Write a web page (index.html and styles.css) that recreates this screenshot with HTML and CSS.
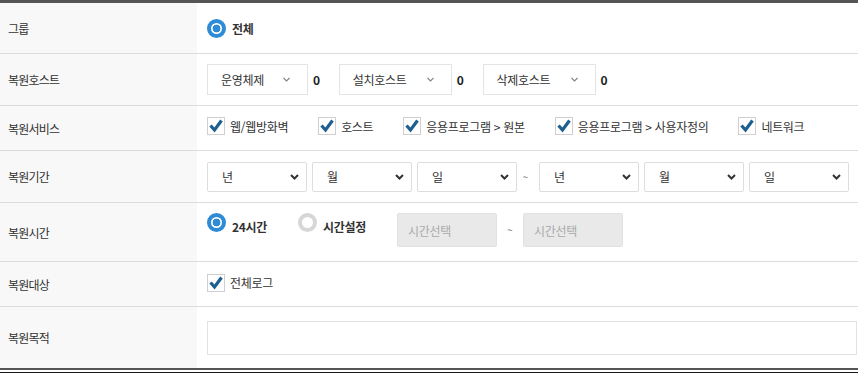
FILE: index.html
```html
<!DOCTYPE html>
<html lang="ko">
<head>
  <meta charset="UTF-8" />
  <title>복원 설정</title>
  <meta name="viewport" content="width=device-width, initial-scale=1.0" />
  <link rel="stylesheet" href="styles.css">
</head>
<body>
  <div class="board">
    <table class="form-table">
      <colgroup>
        <col class="col-label">
        <col>
      </colgroup>
      <tbody>
        <tr>
          <th>그룹</th>
          <td><div class="line h50">
            <label class="radio"><span class="radio-mark on"></span><b>전체</b></label>
          </div></td>
        </tr>
        <tr>
          <th>복원호스트</th>
          <td><div class="line h51">
            <div class="drop w101">운영체제<svg width="7" height="5" viewBox="0 0 7 5"><path d="M0.5 1 L3.5 4 L6.5 1" fill="none" stroke="#8a7f86" stroke-width="1.1"/></svg></div>
            <b class="count">0</b>
            <div class="drop w113">설치호스트<svg width="7" height="5" viewBox="0 0 7 5"><path d="M0.5 1 L3.5 4 L6.5 1" fill="none" stroke="#7f8590" stroke-width="1.1"/></svg></div>
            <b class="count">0</b>
            <div class="drop w113">삭제호스트<svg width="7" height="5" viewBox="0 0 7 5"><path d="M0.5 1 L3.5 4 L6.5 1" fill="none" stroke="#8a7f86" stroke-width="1.1"/></svg></div>
            <b class="count">0</b>
          </div></td>
        </tr>
        <tr>
          <th>복원서비스</th>
          <td><div class="line h44 lift">
            <label class="check"><span class="check-mark"><svg width="16" height="16" viewBox="0 0 16 16"><path d="M2.5 7.5 L6.5 12 L13.5 2.5" fill="none" stroke="#1d5f8e" stroke-width="3.2"/></svg></span>웹/웹방화벽</label>
            <label class="check"><span class="check-mark"><svg width="16" height="16" viewBox="0 0 16 16"><path d="M2.5 7.5 L6.5 12 L13.5 2.5" fill="none" stroke="#1d5f8e" stroke-width="3.2"/></svg></span>호스트</label>
            <label class="check"><span class="check-mark"><svg width="16" height="16" viewBox="0 0 16 16"><path d="M2.5 7.5 L6.5 12 L13.5 2.5" fill="none" stroke="#1d5f8e" stroke-width="3.2"/></svg></span>응용프로그램 &gt; 원본</label>
            <label class="check"><span class="check-mark"><svg width="16" height="16" viewBox="0 0 16 16"><path d="M2.5 7.5 L6.5 12 L13.5 2.5" fill="none" stroke="#1d5f8e" stroke-width="3.2"/></svg></span>응용프로그램 &gt; 사용자정의</label>
            <label class="check"><span class="check-mark"><svg width="16" height="16" viewBox="0 0 16 16"><path d="M2.5 7.5 L6.5 12 L13.5 2.5" fill="none" stroke="#1d5f8e" stroke-width="3.2"/></svg></span>네트워크</label>
          </div></td>
        </tr>
        <tr>
          <th>복원기간</th>
          <td><div class="line h51">
            <div class="date-sel">년<svg width="9" height="6" viewBox="0 0 9 6"><path d="M1 1 L4.5 4.5 L8 1" fill="none" stroke="#333" stroke-width="2"/></svg></div>
            <div class="date-sel">월<svg width="9" height="6" viewBox="0 0 9 6"><path d="M1 1 L4.5 4.5 L8 1" fill="none" stroke="#333" stroke-width="2"/></svg></div>
            <div class="date-sel">일<svg width="9" height="6" viewBox="0 0 9 6"><path d="M1 1 L4.5 4.5 L8 1" fill="none" stroke="#333" stroke-width="2"/></svg></div>
            <span class="tilde">~</span>
            <div class="date-sel">년<svg width="9" height="6" viewBox="0 0 9 6"><path d="M1 1 L4.5 4.5 L8 1" fill="none" stroke="#333" stroke-width="2"/></svg></div>
            <div class="date-sel">월<svg width="9" height="6" viewBox="0 0 9 6"><path d="M1 1 L4.5 4.5 L8 1" fill="none" stroke="#333" stroke-width="2"/></svg></div>
            <div class="date-sel">일<svg width="9" height="6" viewBox="0 0 9 6"><path d="M1 1 L4.5 4.5 L8 1" fill="none" stroke="#333" stroke-width="2"/></svg></div>
          </div></td>
        </tr>
        <tr>
          <th>복원시간</th>
          <td><div class="line h58 top">
            <label class="radio top"><span class="radio-mark on"></span><b>24시간</b></label>
            <label class="radio top"><span class="radio-mark"></span><b>시간설정</b></label>
            <div class="time-box">시간선택</div>
            <span class="tilde wide">~</span>
            <div class="time-box">시간선택</div>
          </div></td>
        </tr>
        <tr>
          <th>복원대상</th>
          <td><div class="line h44 lift-sm">
            <label class="check"><span class="check-mark"><svg width="16" height="16" viewBox="0 0 16 16"><path d="M2.5 7.5 L6.5 12 L13.5 2.5" fill="none" stroke="#1d5f8e" stroke-width="3.2"/></svg></span>전체로그</label>
          </div></td>
        </tr>
        <tr class="last">
          <th>복원목적</th>
          <td><div class="line h61">
            <div class="text-input"></div>
          </div></td>
        </tr>
      </tbody>
    </table>
  </div>
</body>
</html>
```

FILE: styles.css
```css
body {
  margin: 0;
  font-family: "Noto Sans CJK KR", "Noto Sans", sans-serif;
  font-size: 12px;
  letter-spacing: -0.3px;
  color: #333;
  background: #fff;
}

.board {
  width: 858px;
  padding-bottom: 2px;
  border-bottom: 1px solid #1a1a1a;
}

.form-table {
  width: 858px;
  border-spacing: 0;
  table-layout: fixed;
  border-top: 3px solid #555;
  border-bottom: 2px solid #555;
}

.col-label {
  width: 197px;
}

th {
  background: #f8f8f8;
  text-align: left;
  font-weight: normal;
  padding: 0 0 0 8px;
  border-bottom: 1px solid #dcdcdc;
  vertical-align: middle;
  color: #333;
  letter-spacing: -0.8px;
}

td {
  padding: 0 9px 0 10px;
  border-bottom: 1px solid #dcdcdc;
  vertical-align: top;
}

.last th,
.last td {
  border-bottom: none;
}

.line {
  display: flex;
  align-items: center;
  box-sizing: border-box;
}

.h44 { height: 44px; }
.h50 { height: 50px; }
.h51 { height: 51px; }
.h58 { height: 58px; }
.h61 { height: 61px; }

.lift { padding-bottom: 4px; }
.lift-sm { padding-bottom: 3px; }

.line.top {
  align-items: flex-start;
  padding-top: 10px;
}

/* radio */
.radio {
  display: flex;
  align-items: center;
  gap: 6px;
  margin-right: 31px;
}

.radio b {
  font-weight: bold;
  color: #333;
}

.radio.top {
  align-items: flex-start;
}

.radio.top b {
  line-height: 20px;
  padding-top: 4px;
}

.radio-mark {
  width: 19px;
  height: 19px;
  box-sizing: border-box;
  border-radius: 50%;
  border: 4px solid #d6d6d6;
  background: #fff;
}

.radio-mark.on {
  border-color: #2e8bd6;
  background: radial-gradient(circle, #2e8bd6 0 3.6px, #fff 4.2px);
}

/* host selects */
.drop {
  display: flex;
  align-items: center;
  justify-content: space-between;
  height: 31px;
  box-sizing: border-box;
  border: 1px solid #e4e4e4;
  padding: 0 17px 0 13px;
  color: #333;
}

.w101 { width: 101px; }
.w113 { width: 113px; }

.count {
  margin: 0 19px 0 5px;
  font-weight: bold;
  color: #222;
}

/* checkboxes */
.check {
  display: flex;
  align-items: center;
  margin-right: 30px;
  color: #333;
}

.check-mark {
  width: 18px;
  height: 18px;
  box-sizing: border-box;
  border: 1px solid #cfcfcf;
  background: #fff;
  display: flex;
  align-items: center;
  justify-content: center;
  margin-right: 5px;
}

/* date selects */
.date-sel {
  width: 100px;
  height: 30px;
  box-sizing: border-box;
  border: 1px solid #ddd;
  border-radius: 2px;
  margin-right: 5px;
  padding: 0 7px 0 14px;
  display: flex;
  align-items: center;
  justify-content: space-between;
  color: #333;
}

.date-sel:last-child {
  margin-right: 0;
}

.tilde {
  width: 17px;
  text-align: center;
  margin-left: -5px;
  margin-right: 5px;
  color: #777;
  font-size: 10px;
  letter-spacing: 0;
}

.tilde.wide {
  width: 26px;
  margin: 0;
  line-height: 34px;
}

/* time */
.time-box {
  width: 100px;
  height: 34px;
  box-sizing: border-box;
  background: #e9e9e9;
  border: 1px solid #e2e2e2;
  border-radius: 2px;
  padding-left: 10px;
  display: flex;
  align-items: center;
  color: #aaa;
}

.text-input {
  width: 650px;
  flex-shrink: 0;
  height: 34px;
  box-sizing: border-box;
  border: 1px solid #e2e2e2;
  background: #fff;
}
```
